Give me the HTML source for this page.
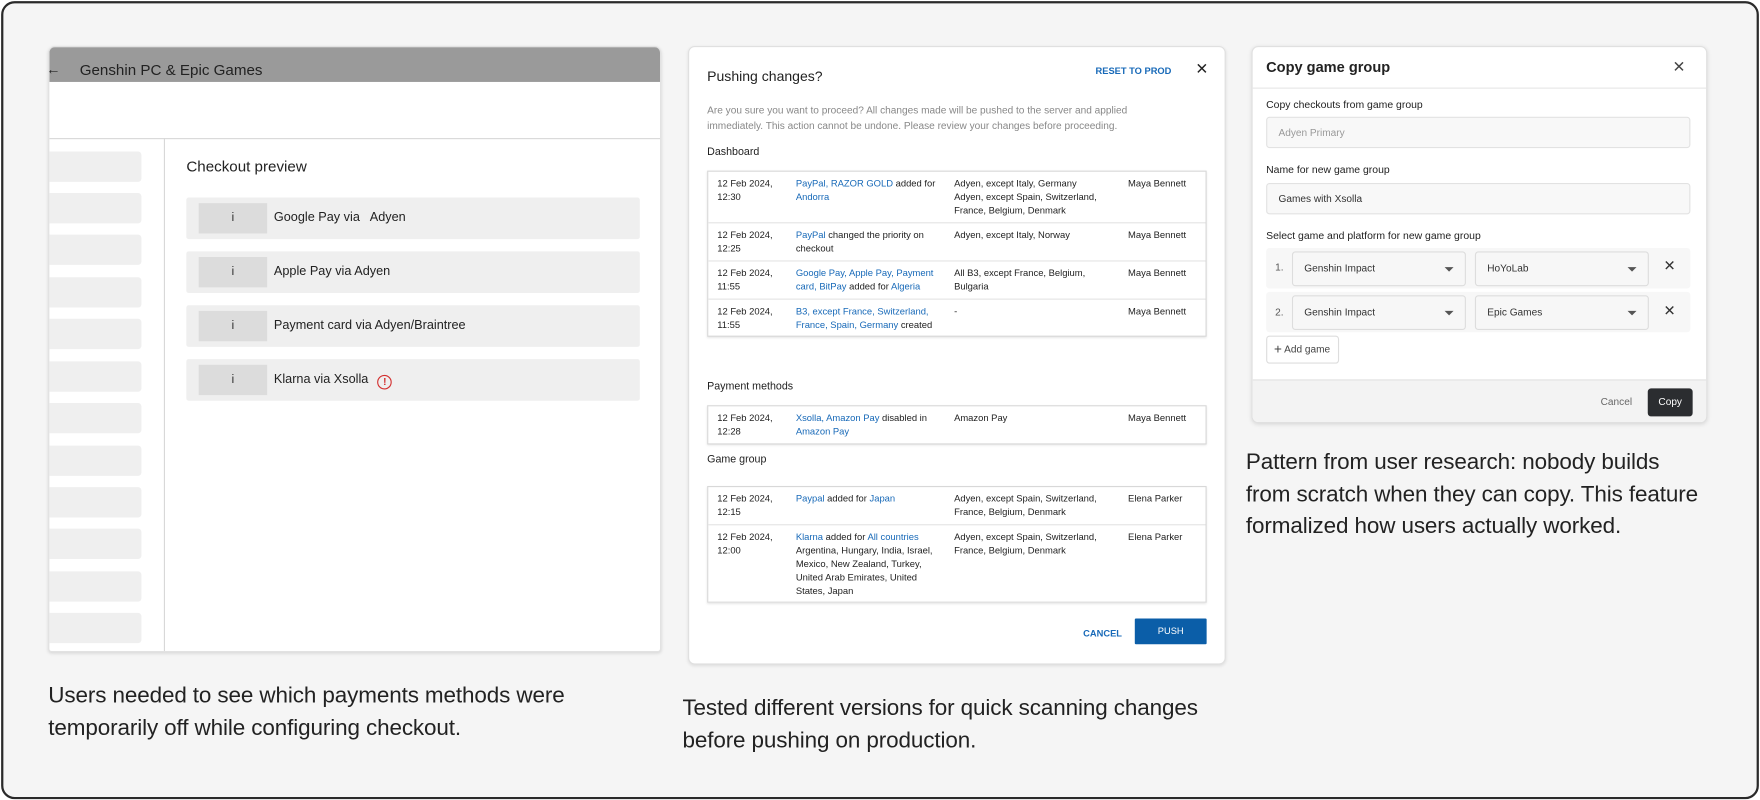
<!DOCTYPE html>
<html><head><meta charset="utf-8"><style>
*{box-sizing:border-box;margin:0;padding:0}
html,body{width:1760px;height:800px;overflow:hidden;background:#fff;font-family:"Liberation Sans",sans-serif}
#w{position:absolute;left:0;top:0;width:1568px;height:713px;transform:scale(1.12245);transform-origin:0 0}
.frame{position:absolute;left:1px;top:1px;width:1566px;height:711px;border:2px solid #2a2a2a;border-radius:12px;background:#f5f5f5}
.abs{position:absolute}
.lc{left:43px;top:41px;width:546px;height:540px;background:#fff;border:1px solid #e2e2e2;border-radius:6px 6px 3px 3px;overflow:hidden;box-shadow:0 1px 3px rgba(0,0,0,.12)}
.sb{position:absolute;left:0;width:82px;height:27px;background:#efefef;border-radius:0 3px 3px 0}
.row{position:absolute;left:122px;width:404px;height:37px;background:#efefef;border-radius:2px}
.row .ic{position:absolute;left:11px;top:5px;width:61px;height:27px;background:#dcdcdc;font-size:11px;text-align:center;line-height:27px;color:#333}
.row .t{position:absolute;left:78px;top:0;line-height:37px;font-size:11.3px;color:#222}
.mc{left:613px;top:41px;width:479px;height:551px;background:#fff;border:1px solid #e0e0e0;border-radius:6px;box-shadow:0 1px 3px rgba(0,0,0,.1)}
.tb{position:absolute;left:16px;width:445px;border:1px solid #d8d8d8;box-shadow:0 1px 2px rgba(0,0,0,.1)}
.tr{position:relative;border-top:1px solid #e4e4e4;font-size:8.4px;line-height:12px;color:#222}
.tr:first-child{border-top:none}
.tr div{position:absolute;top:4px}
.c1{left:8px;width:60px}.c2{left:78px;width:125px}.c3{left:219px;width:135px}.c4{left:374px}
.b{color:#1769b8}
.sec{position:absolute;left:16px;font-size:9.5px;color:#222}
.rc{left:1115px;top:41px;width:406px;height:336px;background:#fff;border:1px solid #e0e0e0;border-radius:6px;overflow:hidden;box-shadow:0 1px 4px rgba(0,0,0,.12)}
.lbl{position:absolute;left:12px;font-size:9.3px;color:#222}
.inp{position:absolute;left:12px;width:378px;height:28px;background:#f8f8f8;border:1px solid #e2e2e2;border-radius:3px;font-size:9px;line-height:26px;padding-left:10px;color:#333}
.gr{position:absolute;left:12px;width:378px;height:36px;background:#f7f7f7;border-radius:3px}
.sel{position:absolute;top:3px;width:155px;height:31px;background:#f7f7f7;border:1px solid #ddd;border-radius:3px;font-size:9px;line-height:29px;padding-left:10px;color:#333}
.sel:after{content:"";position:absolute;right:10px;top:13px;border:4px solid transparent;border-top:4px solid #555}
.cap{position:absolute;font-size:20px;line-height:28.5px;color:#222;letter-spacing:-.1px}
</style></head><body><div id="w">
<div class="frame"></div>

<div class="abs lc">
 <div class="abs" style="left:0;top:0;width:546px;height:31px;background:#9a9a9a"></div>
 <div class="abs" style="left:-3px;top:12px;font-size:13px;color:#222">&#8592;</div>
 <div class="abs" style="left:27px;top:13px;font-size:13.5px;color:#222">Genshin PC &amp; Epic Games</div>
 <div class="abs" style="left:0;top:81px;width:546px;height:1px;background:#d8d8d8"></div>
 <div class="abs" style="left:102px;top:81px;width:1px;height:460px;background:#d8d8d8"></div>
 <div class="sb" style="top:93px"></div><div class="sb" style="top:130px"></div><div class="sb" style="top:167px"></div><div class="sb" style="top:205px"></div><div class="sb" style="top:242px"></div><div class="sb" style="top:280px"></div><div class="sb" style="top:317px"></div><div class="sb" style="top:355px"></div><div class="sb" style="top:392px"></div><div class="sb" style="top:429px"></div><div class="sb" style="top:467px"></div><div class="sb" style="top:504px"></div>
 <div class="abs" style="left:122px;top:99px;font-size:13.5px;color:#222">Checkout preview</div>
 <div class="row" style="top:134px"><div class="ic">i</div><div class="t">Google Pay via &nbsp; Adyen</div></div>
 <div class="row" style="top:182px"><div class="ic">i</div><div class="t">Apple Pay via Adyen</div></div>
 <div class="row" style="top:230px"><div class="ic">i</div><div class="t">Payment card via Adyen/Braintree</div></div>
 <div class="row" style="top:278px"><div class="ic">i</div><div class="t">Klarna via Xsolla <span style="display:inline-block;width:13px;height:13px;border:1.5px solid #d32f2f;border-radius:50%;color:#d32f2f;font-size:9px;line-height:10px;text-align:center;font-weight:bold;vertical-align:-2px;margin-left:5px">!</span></div></div>
</div>

<div class="abs mc">
 <div class="abs" style="left:16px;top:19px;font-size:12.5px;color:#222">Pushing changes?</div>
 <div class="abs" style="left:362px;top:16px;font-size:8.3px;font-weight:bold;color:#1769b8">RESET TO PROD</div>
 <div class="abs" style="left:451px;top:11px;font-size:14px;color:#222">&#x2715;</div>
 <div class="abs" style="left:16px;top:49px;width:420px;font-size:9px;line-height:14px;color:#888">Are you sure you want to proceed? All changes made will be pushed to the server and applied immediately. This action cannot be undone. Please review your changes before proceeding.</div>
 <div class="sec" style="top:88px">Dashboard</div>
 <div class="tb" style="top:110px">
  <div class="tr" style="height:45px"><div class="c1">12 Feb 2024,<br>12:30</div><div class="c2"><span class="b">PayPal, RAZOR GOLD</span> added for <span class="b">Andorra</span></div><div class="c3" style="width:130px">Adyen, except Italy, Germany Adyen, except Spain, Switzerland, France, Belgium, Denmark</div><div class="c4">Maya Bennett</div></div>
  <div class="tr" style="height:34px"><div class="c1">12 Feb 2024,<br>12:25</div><div class="c2"><span class="b">PayPal</span> changed the priority on checkout</div><div class="c3" style="width:150px">Adyen, except Italy, Norway</div><div class="c4">Maya Bennett</div></div>
  <div class="tr" style="height:34px"><div class="c1">12 Feb 2024,<br>11:55</div><div class="c2"><span class="b">Google Pay, Apple Pay, Payment card, BitPay</span> added for <span class="b">Algeria</span></div><div class="c3">All B3, except France, Belgium, Bulgaria</div><div class="c4">Maya Bennett</div></div>
  <div class="tr" style="height:33px"><div class="c1">12 Feb 2024,<br>11:55</div><div class="c2"><span class="b">B3, except France, Switzerland, France, Spain, Germany</span> created</div><div class="c3">-</div><div class="c4">Maya Bennett</div></div>
 </div>
 <div class="sec" style="top:297px">Payment methods</div>
 <div class="tb" style="top:319px"><div class="tr" style="height:33px"><div class="c1">12 Feb 2024,<br>12:28</div><div class="c2"><span class="b">Xsolla, Amazon Pay</span> disabled in <span class="b">Amazon Pay</span></div><div class="c3">Amazon Pay</div><div class="c4">Maya Bennett</div></div></div>
 <div class="sec" style="top:362px">Game group</div>
 <div class="tb" style="top:391px">
  <div class="tr" style="height:33px"><div class="c1">12 Feb 2024,<br>12:15</div><div class="c2"><span class="b">Paypal</span> added for <span class="b">Japan</span></div><div class="c3" style="width:140px">Adyen, except Spain, Switzerland, France, Belgium, Denmark</div><div class="c4">Elena Parker</div></div>
  <div class="tr" style="height:69px"><div class="c1">12 Feb 2024,<br>12:00</div><div class="c2"><span class="b">Klarna</span> added for <span class="b">All countries</span> Argentina, Hungary, India, Israel, Mexico, New Zealand, Turkey, United Arab Emirates, United States, Japan</div><div class="c3" style="width:140px">Adyen, except Spain, Switzerland, France, Belgium, Denmark</div><div class="c4">Elena Parker</div></div>
 </div>
 <div class="abs" style="left:351px;top:517px;font-size:8.3px;font-weight:bold;color:#1769b8">CANCEL</div>
 <div class="abs" style="left:397px;top:509px;width:64px;height:23px;background:#0b5ea8;border-radius:1px;color:#fff;font-size:8.3px;text-align:center;line-height:23px">PUSH</div>
</div>

<div class="abs rc">
 <div class="abs" style="left:12px;top:10px;font-size:13px;font-weight:bold;color:#222">Copy game group</div>
 <div class="abs" style="left:374px;top:9px;font-size:14px;color:#444">&#x2715;</div>
 <div class="abs" style="left:0;top:36px;width:406px;height:1px;background:#e6e6e6"></div>
 <div class="lbl" style="top:46px">Copy checkouts from game group</div>
 <div class="inp" style="top:62px;color:#999">Adyen Primary</div>
 <div class="lbl" style="top:104px">Name for new game group</div>
 <div class="inp" style="top:121px">Games with Xsolla</div>
 <div class="lbl" style="top:163px">Select game and platform for new game group</div>
 <div class="gr" style="top:179px"><div class="abs" style="left:8px;top:12px;font-size:9px;color:#555">1.</div><div class="sel" style="left:23px">Genshin Impact</div><div class="sel" style="left:186px">HoYoLab</div><div class="abs" style="left:354px;top:8px;font-size:13px;color:#333">&#x2715;</div></div>
 <div class="gr" style="top:218px"><div class="abs" style="left:8px;top:13px;font-size:9px;color:#555">2.</div><div class="sel" style="left:23px">Genshin Impact</div><div class="sel" style="left:186px">Epic Games</div><div class="abs" style="left:354px;top:9px;font-size:13px;color:#333">&#x2715;</div></div>
 <div class="abs" style="left:12px;top:257px;width:65px;height:25px;border:1px solid #ddd;border-radius:3px;font-size:9px;line-height:23px;color:#444;padding-left:6px"><span style="font-size:12px;vertical-align:-1px">+</span> Add game</div>
 <div class="abs" style="left:0;top:296px;width:406px;height:40px;background:#f3f3f3;border-top:1px solid #e2e2e2"></div>
 <div class="abs" style="left:310px;top:311px;font-size:9px;color:#666">Cancel</div>
 <div class="abs" style="left:352px;top:304px;width:40px;height:25px;background:#2b2d30;border-radius:3px;color:#fff;font-size:9px;text-align:center;line-height:25px">Copy</div>
</div>

<div class="cap" style="left:43px;top:606px">Users needed to see which payments methods were<br>temporarily off while configuring checkout.</div>
<div class="cap" style="left:608px;top:617px">Tested different versions for quick scanning changes<br>before pushing on production.</div>
<div class="cap" style="left:1110px;top:398px">Pattern from user research: nobody builds<br>from scratch when they can copy. This feature<br>formalized how users actually worked.</div>
</div></body></html>
